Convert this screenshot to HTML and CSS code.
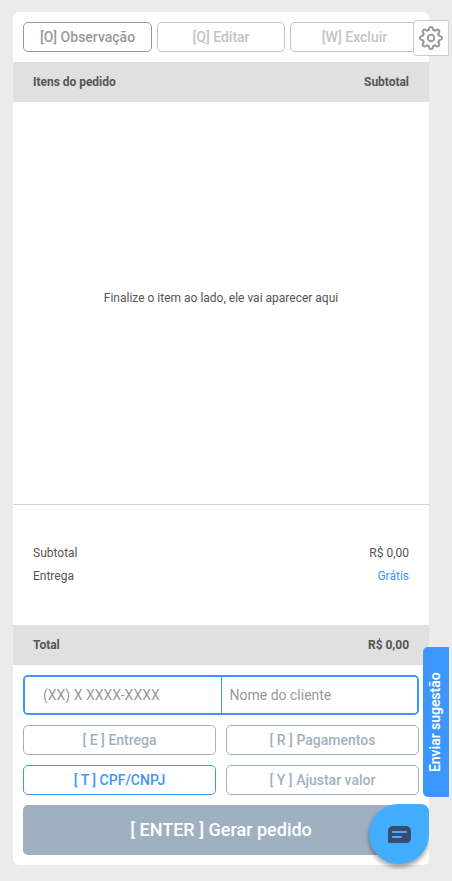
FILE: index.html
```
<!DOCTYPE html>
<html lang="pt-BR">
<head>
<meta charset="utf-8">
<title>Pedido</title>
<link rel="stylesheet" href="styles.css">
</head>
<body>
<main class="order">
  <div class="toolbar">
    <button class="btn btn-dark">[O] Observação</button>
    <button class="btn btn-muted">[Q] Editar</button>
    <button class="btn btn-muted">[W] Excluir</button>
  </div>
  <div class="bar"><span>Itens do pedido</span><span>Subtotal</span></div>
  <section class="items">Finalize o item ao lado, ele vai aparecer aqui</section>
  <section class="summary">
    <div class="row"><span>Subtotal</span><span>R$ 0,00</span></div>
    <div class="row"><span>Entrega</span><span class="free">Grátis</span></div>
  </section>
  <div class="bar"><span>Total</span><span>R$ 0,00</span></div>
  <div class="actions">
    <div class="customer">
      <input class="phone" type="text" placeholder="(XX) X XXXX-XXXX">
      <input class="name" type="text" placeholder="Nome do cliente">
    </div>
    <div class="grid">
      <button class="btn">[ E ] Entrega</button>
      <button class="btn">[ R ] Pagamentos</button>
      <button class="btn btn-blue">[ T ] CPF/CNPJ</button>
      <button class="btn">[ Y ] Ajustar valor</button>
    </div>
    <button class="submit">[ ENTER ] Gerar pedido</button>
  </div>
</main>
<button class="settings" aria-label="Configurações">
  <svg width="26" height="26" viewBox="-13 -13 26 26" fill="none" stroke="#999" stroke-width="1.9" stroke-linecap="round">
    <defs><path id="tooth" d="M-3.25-7.85C-2.4-7.55-1.9-8-1.9-9Q-1.8-11 0-11Q1.8-11 1.9-9C1.9-8 2.4-7.55 3.25-7.85"/></defs>
    <use href="#tooth"/><use href="#tooth" transform="rotate(45)"/><use href="#tooth" transform="rotate(90)"/><use href="#tooth" transform="rotate(135)"/>
    <use href="#tooth" transform="rotate(180)"/><use href="#tooth" transform="rotate(225)"/><use href="#tooth" transform="rotate(270)"/><use href="#tooth" transform="rotate(315)"/>
    <circle r="3.3"/>
  </svg>
</button>
<button class="suggest">Enviar sugestão</button>
<button class="chat" aria-label="Chat">
  <svg width="23" height="17" viewBox="0 0 23 17">
    <path d="M5.500 0H17.500Q23 0 23 5.500V11.500Q23 17 17.500 17H1.500Q0 17 0 15.500V5.500Q0 0 5.500 0Z" fill="#3c4b6b"/>
    <path d="M4.800 6H18.200M4.800 11H13.200" stroke="#42adff" stroke-width="1.800" stroke-linecap="round"/>
  </svg>
</button>
</body>
</html>
```
FILE: styles.css
```
* { box-sizing: border-box; }
body {
  margin: 0;
  height: 881px;
  padding: 12px 23px 16px 13px;
  background: #ebebeb;
  color: #555;
  font: 12px Roboto, sans-serif;
  overflow: hidden;
}
button, input { font-family: inherit; margin: 0; }
.order {
  height: 853px;
  display: flex;
  flex-direction: column;
  background: #fff;
  border-radius: 6px;
}
.toolbar {
  display: grid;
  grid-template-columns: 129px 128px 129px;
  gap: 5px;
  padding: 10px;
}
.btn {
  height: 30px;
  padding: 0;
  border: 1px solid #9fb1c1;
  border-radius: 5px;
  background: #fff;
  color: #9fb1c1;
  font-size: 14px;
  font-weight: 500;
}
.btn-dark { border-color: #999; color: #999; }
.btn-muted { border-color: #c4c4c4; color: #c4c4c4; }
.btn-blue { border-color: #3d96fb; color: #3d96fb; }
.bar {
  height: 40px;
  flex: none;
  display: flex;
  justify-content: space-between;
  align-items: center;
  padding: 0 20px;
  background: #e0e0e0;
  font-weight: 700;
  letter-spacing: -0.03px;
}
.items {
  flex: 1;
  display: flex;
  align-items: center;
  justify-content: center;
  padding-bottom: 10px;
  border-bottom: 1px solid #d2d2d7;
}
.summary {
  height: 120px;
  padding: 37px 20px 0;
}
.row {
  display: flex;
  justify-content: space-between;
  line-height: 23px;
}
.free { color: #3d96fb; }
.actions {
  display: flex;
  flex-direction: column;
  gap: 10px;
  padding: 10px;
}
.customer {
  height: 40px;
  display: flex;
  border: 2px solid #3d96fb;
  border-radius: 5px;
  overflow: hidden;
}
.customer input {
  min-width: 0;
  border: 0;
  outline: 0;
  font-size: 14px;
  color: #555;
}
.customer input::placeholder { color: #999; opacity: 1; }
.customer .phone { width: 197px; padding: 0 18px; border-right: 1px solid #3d96fb; }
.customer .name { flex: 1; padding: 0 7.5px; }
.grid {
  display: grid;
  grid-template-columns: 1fr 1fr;
  gap: 10px;
}
.submit {
  height: 50px;
  padding: 0 0 2px;
  border: 0;
  border-radius: 5px;
  background: #9fb1c1;
  color: #fff;
  font-size: 18px;
  font-weight: 500;
}
.settings {
  position: absolute;
  top: 20px;
  right: 3px;
  width: 36px;
  height: 36px;
  padding: 0;
  display: grid;
  place-items: center;
  border: 1px solid #ccc;
  border-radius: 4px 0 0 4px;
  background: #fff;
}
.suggest {
  position: absolute;
  top: 647px;
  right: 3px;
  width: 26px;
  height: 150px;
  padding: 0 0 0 2px;
  border: 0;
  border-radius: 0 5px 5px 0;
  background: #3d96fb;
  color: #fff;
  font-size: 14px;
  font-weight: 600;
  letter-spacing: -0.05px;
  writing-mode: vertical-rl;
  transform: rotate(180deg);
}
.chat {
  position: absolute;
  top: 804px;
  right: 23px;
  width: 60px;
  height: 60px;
  padding: 1px 0 0 1px;
  display: grid;
  place-items: center;
  border: 0;
  border-radius: 30px 8px 30px 30px;
  background: #42adff;
  box-shadow: 0 3px 5px rgba(0, 0, 0, .4);
  clip-path: inset(0 0 -6px -8px);
}
```
